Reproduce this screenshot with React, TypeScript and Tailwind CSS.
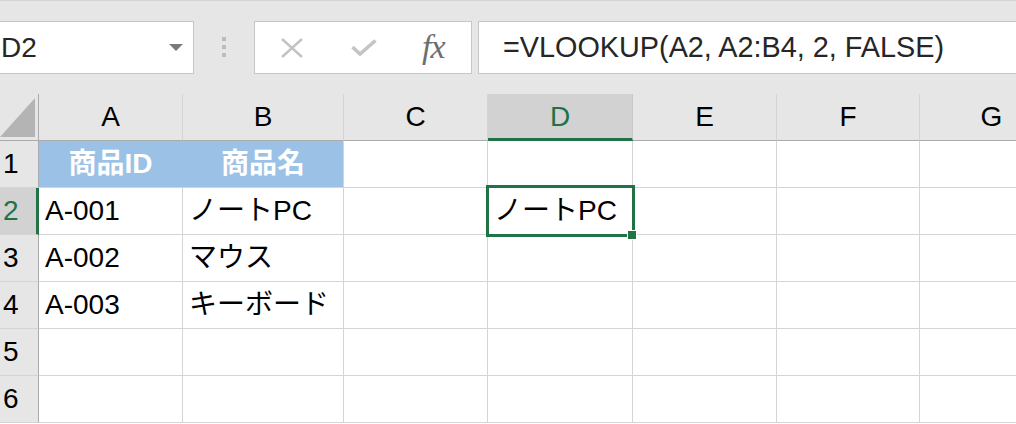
import React from 'react';

const cols = ['A', 'B', 'C', 'D', 'E', 'F', 'G'];

const rows: string[][] = [
  ['商品ID', '商品名', '', '', '', '', ''],
  ['A-001', 'ノートPC', '', 'ノートPC', '', '', ''],
  ['A-002', 'マウス', '', '', '', '', ''],
  ['A-003', 'キーボード', '', '', '', '', ''],
  ['', '', '', '', '', '', ''],
  ['', '', '', '', '', '', ''],
];

const gridCols = 'grid w-[1064px] grid-cols-[39px_144px_161px_144px_145px_144px_143px_144px]';

function FormulaBar() {
  return (
    <div className="h-[94px] bg-[#e6e6e6] border-t border-[#d4d4d4] pt-[20px] flex items-start">
      {/* name box */}
      <div className="w-[195px] h-[53px] -ml-px border border-[#c6c6c6] bg-white flex items-center">
        <span className="text-[28px] leading-none text-[#262626] pl-[1px]">D2</span>
        <svg className="ml-auto mr-[10px]" width="14" height="8" viewBox="0 0 14 8">
          <polygon points="0,0 14,0 7,7" fill="#7a7a7a" />
        </svg>
      </div>

      {/* grip dots */}
      <div className="ml-[28px] w-[4px] h-[53px] flex flex-col pt-[16px] gap-[4px]">
        <div className="w-[4px] h-[4px] bg-[#bcbcbc]" />
        <div className="w-[4px] h-[4px] bg-[#bcbcbc]" />
        <div className="w-[4px] h-[4px] bg-[#bcbcbc]" />
      </div>

      {/* cancel / enter / fx */}
      <div className="ml-[28px] w-[218px] h-[53px] border border-[#c6c6c6] bg-white flex items-center">
        <svg className="ml-[25px]" width="24" height="20" viewBox="0 0 24 20">
          <path d="M2 1 L22 19 M22 1 L2 19" stroke="#c4c4c4" strokeWidth="2.6" fill="none" />
        </svg>
        <svg className="ml-[47px]" width="26" height="17" viewBox="0 0 26 17">
          <path d="M1.5 8 L9 15 L24.5 1.5" stroke="#c4c4c4" strokeWidth="3.6" fill="none" />
        </svg>
        <span className="ml-[45px] -mt-[2px] text-[34px] leading-none italic text-[#6e6e6e] font-['Liberation_Serif',serif] tracking-[-1px]">
          fx
        </span>
      </div>

      {/* formula input */}
      <div className="ml-[6px] flex-1 -mr-[2px] h-[53px] border border-[#c6c6c6] bg-white flex items-center pl-[24px]">
        <span className="text-[28.8px] leading-none text-[#262626]">=VLOOKUP(A2, A2:B4, 2, FALSE)</span>
      </div>
    </div>
  );
}

function ColumnHeader() {
  return (
    <div className={`${gridCols} h-[47px]`}>
      <div className="relative bg-[#e6e6e6] border-r border-b border-[#ababab]">
        <svg className="absolute left-0 top-0" width="38" height="46" viewBox="0 0 38 46">
          <polygon points="0,43 35,43 35,4" fill="#b4b4b4" />
        </svg>
      </div>
      {cols.map((c) => {
        const active = c === 'D';
        return (
          <div
            key={c}
            className={
              active
                ? 'bg-[#d2d2d2] border-r border-r-[#c8c8c8] border-b-[3px] border-b-[#217346] flex items-center justify-center pt-[2px] text-[28px] text-[#217346]'
                : 'bg-[#e6e6e6] border-r border-r-[#d4d4d4] border-b border-b-[#ababab] flex items-center justify-center text-[28px] text-black'
            }
          >
            <span className="leading-none">{c}</span>
          </div>
        );
      })}
    </div>
  );
}

function Row({ index, cells }: { index: number; cells: string[] }) {
  const activeRow = index === 2;
  return (
    <div className={`${gridCols} h-[47px]`}>
      <div
        className={
          activeRow
            ? 'bg-[#d2d2d2] border-b border-b-[#d4d4d4] border-r-[3px] border-r-[#217346] flex items-center pl-[3px] text-[28px] text-[#217346]'
            : 'bg-[#e6e6e6] border-b border-b-[#d4d4d4] border-r border-r-[#ababab] flex items-center pl-[3px] text-[28px] text-black'
        }
      >
        <span className="leading-none">{index}</span>
      </div>
      {cells.map((v, i) => {
        const header = index === 1 && i < 2;
        const selected = activeRow && i === 3;
        if (header) {
          return (
            <div
              key={i}
              className={`bg-[#9bc2e6] border-b border-b-[#d4d4d4] border-r ${i === 0 ? 'border-r-[#9bc2e6]' : 'border-r-[#d4d4d4]'} flex items-center justify-center`}
            >
              <span className="text-[28px] leading-none font-bold text-white">{v}</span>
            </div>
          );
        }
        return (
          <div
            key={i}
            className={`relative bg-white border-r border-b border-[#d4d4d4] flex items-center pl-[6px] ${selected ? 'z-10' : ''}`}
          >
            <span className="text-[28px] leading-none text-black whitespace-nowrap">{v}</span>
            {selected && (
              <div className="absolute z-10 -left-[2px] -top-[3px] -right-[3px] -bottom-[3px] border-3 border-solid border-[#217346]">
                <div className="absolute -right-[5px] -bottom-[6px] w-[10px] h-[10px] bg-[#217346] border border-white" />
              </div>
            )}
          </div>
        );
      })}
    </div>
  );
}

export default function App() {
  return (
    <div className="w-[1016px] h-[424px] overflow-hidden bg-white font-[family-name:'Liberation_Sans','Noto_Sans_CJK_JP',sans-serif]">
      <FormulaBar />
      <ColumnHeader />
      {rows.map((cells, i) => (
        <Row key={i} index={i + 1} cells={cells} />
      ))}
    </div>
  );
}
